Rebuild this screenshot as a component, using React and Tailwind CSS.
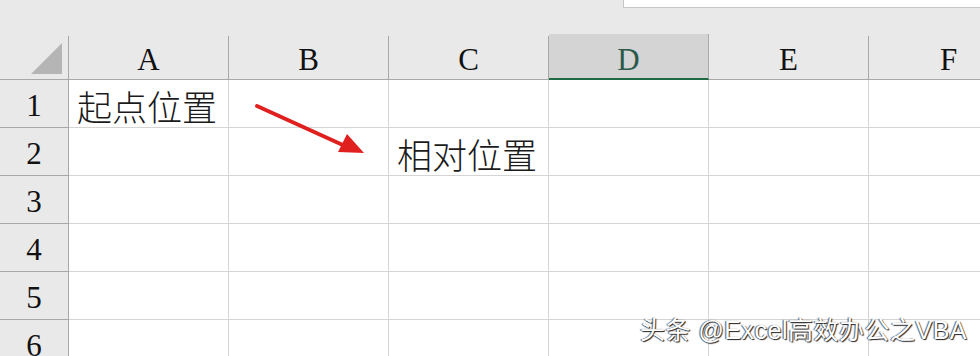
import React from "react";

const cols = ["A", "B", "C", "D", "E", "F"];
const rows = [1, 2, 3, 4, 5, 6];

function Cell({ r, c }) {
  let content = null;
  if (r === 1 && c === "A") content = "起点位置";
  if (r === 2 && c === "C") content = "相对位置";
  return (
    <div className="h-full bg-white border-r border-b border-[#d4d4d4] flex items-center pl-[8px] pt-[4px] overflow-visible whitespace-nowrap">
      {content && (
        <span className="text-[35px] leading-none text-[#1a1a1a] font-['Noto_Sans_CJK_SC',sans-serif] font-light">
          {content}
        </span>
      )}
    </div>
  );
}

export default function App() {
  return (
    <div className="relative w-[980px] h-[356px] overflow-hidden bg-[#e9e9e9] font-['Liberation_Serif',serif]">
      {/* top band */}
      <div className="h-[36px] flex">
        <div className="ml-auto w-[357px] h-[8px] bg-white border-l border-b border-[#c6c6c6]" />
      </div>

      {/* header row */}
      <div className="grid grid-cols-[69px_160px_160px_160px_160px_160px_160px] h-[44px]">
        <div className="relative border-r border-b border-[#a8a8a8]">
          <svg className="absolute left-[31px] top-[7px]" width="31" height="31" viewBox="0 0 31 31">
            <polygon points="31,0 31,31 0,31" fill="#b5b5b5" />
          </svg>
        </div>
        {cols.map((c) => (
          <div
            key={c}
            className={
              c === "D"
                ? "relative -mt-[2px] bg-[#d4d4d4] border-r border-[#ababab] border-b-2 border-b-[#1f6b45] flex items-center justify-center pt-[6px]"
                : "border-r border-b border-[#a8a8a8] bg-[#e9e9e9] flex items-center justify-center pt-[4px]"
            }
          >
            <span
              className={
                c === "D"
                  ? "text-[31px] leading-none text-[#2b5a4c]"
                  : "text-[31px] leading-none text-[#111]"
              }
            >
              {c}
            </span>
          </div>
        ))}
      </div>

      {/* body rows */}
      {rows.map((r) => (
        <div
          key={r}
          className="grid grid-cols-[69px_160px_160px_160px_160px_160px_160px] h-[48px]"
        >
          <div className="bg-[#e9e9e9] border-r border-b border-[#a8a8a8] flex items-center justify-center pt-[4px]">
            <span className="text-[31px] leading-none text-[#111]">{r}</span>
          </div>
          {cols.map((c) => (
            <Cell key={c} r={r} c={c} />
          ))}
        </div>
      ))}

      {/* red arrow */}
      <svg className="absolute left-0 top-0 pointer-events-none" width="980" height="356">
        <line x1="257" y1="106" x2="345" y2="146" stroke="#e0201f" strokeWidth="4" strokeLinecap="round" />
        <polygon points="364,153 338,152 347,134" fill="#e0201f" />
      </svg>

      {/* watermark */}
      <div className="absolute left-[640px] top-[318px] text-[25px] tracking-[0.5px] leading-none text-white whitespace-nowrap font-['Liberation_Sans','Noto_Sans_CJK_SC',sans-serif] [text-shadow:1px_1px_1px_#222,-1px_0_1px_#555]">
        头条 @Excel高效办公之VBA
      </div>
    </div>
  );
}
